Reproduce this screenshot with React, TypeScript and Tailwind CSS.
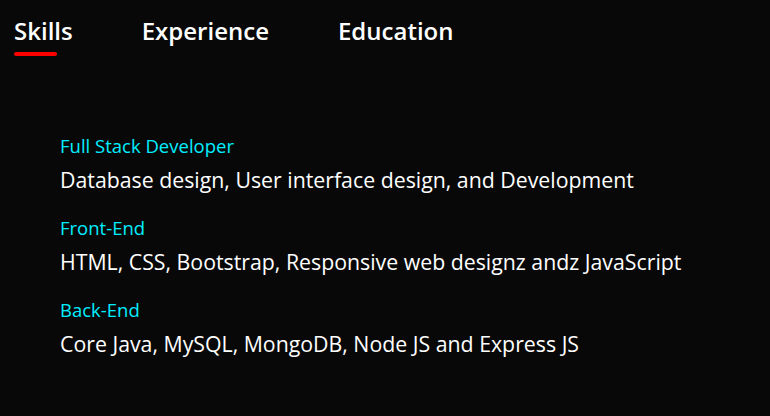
import React from "react";

const items = [
  { t: "Full Stack Developer", d: "Database design, User interface design, and Development" },
  { t: "Front-End", d: "HTML, CSS, Bootstrap, Responsive web designz andz JavaScript" },
  { t: "Back-End", d: "Core Java, MySQL, MongoDB, Node JS and Express JS" },
];

export default function App() {
  return (
    <div
      className="w-[770px] h-[416px] bg-[#080808] text-white overflow-hidden"
      style={{ fontFamily: '"Open Sans", "Noto Sans", sans-serif' }}
    >
      <div className="flex gap-[69px] pl-[14px] pt-[13px]">
        {["Skills", "Experience", "Education"].map((x, i) => (
          <div key={x} className="flex flex-col">
            <span className="text-[24px] font-semibold leading-[36px]">{x}</span>
            {i === 0 && <span className="mt-[3px] h-[4px] w-[43px] rounded-full bg-[#ff0000]" />}
          </div>
        ))}
      </div>
      <ul className="pl-[60px] mt-[76px] flex flex-col gap-[14px]">
        {items.map((it) => (
          <li key={it.t} className="flex flex-col">
            <span className="text-[#00eeff] text-[18.5px] leading-[28px]">{it.t}</span>
            <span className="text-[21.3px] leading-[40px]">{it.d}</span>
          </li>
        ))}
      </ul>
    </div>
  );
}
